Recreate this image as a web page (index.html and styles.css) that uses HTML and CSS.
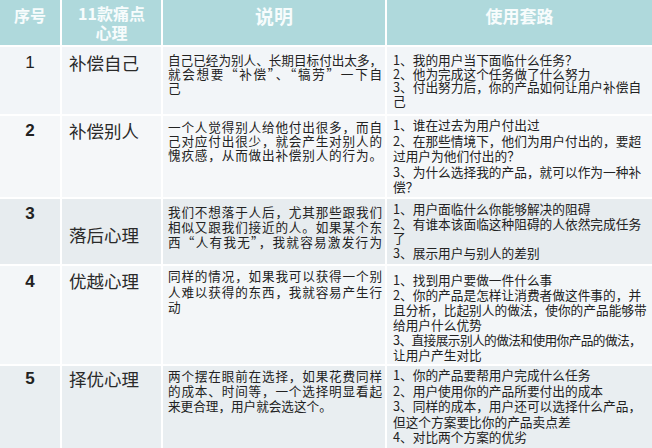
FILE: index.html
```html
<!DOCTYPE html>
<html lang="zh-CN">
<head>
<meta charset="utf-8">
<title>11款痛点心理</title>
<link rel="stylesheet" href="styles.css">
</head>
<body>
<div class="table">
  <div class="h h1">序号</div>
  <div class="h h2">11款痛点<br>心理</div>
  <div class="h h3">说明</div>
  <div class="h h4">使用套路</div>

  <div class="c num r1 n1">1</div>
  <div class="c name r1">补偿自己</div>
  <div class="c desc r1">
    <span class="l j">自己已经为别人、长期目标付出太多，</span>
    <span class="l j">就会想要“补偿”、“犒劳”一下自</span>
    <span class="l">己</span>
  </div>
  <div class="c tips r1">
    <span class="l">1、我的用户当下面临什么任务？</span>
    <span class="l">2、他为完成这个任务做了什么努力</span>
    <span class="l">3、付出努力后，你的产品如何让用户补偿自</span>
    <span class="l">己</span>
  </div>

  <div class="c num r2">2</div>
  <div class="c name r2">补偿别人</div>
  <div class="c desc r2">
    <span class="l j">一个人觉得别人给他付出很多，而自</span>
    <span class="l j">己对应付出很少，就会产生对别人的</span>
    <span class="l j">愧疚感，从而做出补偿别人的行为。</span>
  </div>
  <div class="c tips r2">
    <span class="l">1、谁在过去为用户付出过</span>
    <span class="l">2、在那些情境下，他们为用户付出的，要超</span>
    <span class="l">过用户为他们付出的？</span>
    <span class="l">3、为什么选择我的产品，就可以作为一种补</span>
    <span class="l">偿？</span>
  </div>

  <div class="c num r3">3</div>
  <div class="c name r3 mid">落后心理</div>
  <div class="c desc r3">
    <span class="l j">我们不想落于人后，尤其那些跟我们</span>
    <span class="l j">相似又跟我们接近的人。如果某个东</span>
    <span class="l j">西“人有我无”，我就容易激发行为</span>
  </div>
  <div class="c tips r3">
    <span class="l">1、用户面临什么你能够解决的阻碍</span>
    <span class="l">2、有谁本该面临这种阻碍的人依然完成任务</span>
    <span class="l">了</span>
    <span class="l">3、展示用户与别人的差别</span>
  </div>

  <div class="c num r4">4</div>
  <div class="c name r4">优越心理</div>
  <div class="c desc r4">
    <span class="l j">同样的情况，如果我可以获得一个别</span>
    <span class="l j">人难以获得的东西，我就容易产生行</span>
    <span class="l">动</span>
  </div>
  <div class="c tips r4">
    <span class="l">1、找到用户要做一件什么事</span>
    <span class="l">2、你的产品是怎样让消费者做这件事的，并</span>
    <span class="l">且分析，比起别人的做法，使你的产品能够带</span>
    <span class="l">给用户什么优势</span>
    <span class="l tight">3、直接展示别人的做法和使用你产品的做法，</span>
    <span class="l">让用户产生对比</span>
  </div>

  <div class="c num r5">5</div>
  <div class="c name r5">择优心理</div>
  <div class="c desc r5">
    <span class="l j">两个摆在眼前在选择，如果花费同样</span>
    <span class="l j">的成本、时间等，一个选择明显看起</span>
    <span class="l">来更合理，用户就会选这个。</span>
  </div>
  <div class="c tips r5">
    <span class="l">1、你的产品要帮用户完成什么任务</span>
    <span class="l">2、用户使用你的产品所要付出的成本</span>
    <span class="l">3、同样的成本，用户还可以选择什么产品，</span>
    <span class="l">但这个方案要比你的产品卖点差</span>
    <span class="l">4、对比两个方案的优劣</span>
  </div>
</div>
</body>
</html>
```

FILE: styles.css
```css
html, body {
  margin: 0;
  padding: 0;
  background: #ffffff;
}
body {
  width: 652px;
  height: 448px;
  overflow: hidden;
  font-family: "Noto Sans CJK SC", "Liberation Sans", sans-serif;
  color: #222;
}
.table {
  display: grid;
  grid-template-columns: 60px 99px 222px 265px;
  grid-template-rows: 45px 67px 81px 65px 98px 82px;
  gap: 2px;
  background: #ffffff;
  width: 652px;
  height: 448px;
}
.h {
  background: #afd9dc;
  color: #f7fcfc;
  font-weight: bold;
  text-align: center;
  box-sizing: border-box;
}
.h1 {
  font-size: 16px;
  line-height: 20px;
  padding-top: 5px;
}
.h2 {
  font-size: 16px;
  line-height: 19px;
  padding-top: 4px;
}
.h3 {
  font-size: 19px;
  line-height: 24px;
  padding-top: 4px;
}
.h4 {
  font-size: 17px;
  line-height: 22px;
  padding-top: 5px;
}
.c {
  box-sizing: border-box;
  white-space: nowrap;
  overflow: hidden;
}
.r1 { background: #f2f5f8; }
.r2 { background: #f5f7f9; }
.r3 { background: #e7ecef; }
.r4 { background: #f3f6f8; }
.r5 { background: #e9eef1; }

.num {
  font-family: "Liberation Sans", Arial, sans-serif;
  font-size: 17px;
  line-height: 20px;
  font-weight: bold;
  text-align: center;
  color: #222;
}
.num.n1 { font-weight: normal; }
.name {
  font-size: 17.5px;
  line-height: 22px;
  padding-left: 7px;
  color: #2a2a2a;
}
.desc {
  font-size: 12.6px;
  padding-left: 5px;
  padding-right: 3px;
}
.tips {
  font-size: 12.7px;
  padding-left: 6px;
}
.l { display: block; }
.j {
  text-align: justify;
  text-align-last: justify;
}
.tight { letter-spacing: -0.6px; }

/* row 1 */
.num.r1 { padding-top: 6px; }
.name.r1 { padding-top: 5px; }
.desc.r1 { padding-top: 6px; line-height: 14px; }
.tips.r1 { padding-top: 6px; line-height: 13.6px; }

/* row 2 */
.num.r2 { padding-top: 5px; }
.name.r2 { padding-top: 4px; }
.desc.r2 { padding-top: 4px; line-height: 14px; }
.tips.r2 { padding-top: 1px; line-height: 15.5px; }

/* row 3 */
.num.r3 { padding-top: 5px; }
.name.r3 { padding-top: 25px; }
.desc.r3 { padding-top: 5px; line-height: 15px; }
.tips.r3 { padding-top: 3px; line-height: 14.7px; }

/* row 4 */
.num.r4 { padding-top: 6px; }
.name.r4 { padding-top: 4px; }
.desc.r4 { padding-top: 2px; line-height: 15.5px; }
.tips.r4 { padding-top: 6px; line-height: 15px; }

/* row 5 */
.num.r5 { padding-top: 3px; }
.name.r5 { padding-top: 2px; }
.desc.r5 { padding-top: 2px; line-height: 15px; }
.tips.r5 { padding-top: 1px; line-height: 15.5px; }
```
